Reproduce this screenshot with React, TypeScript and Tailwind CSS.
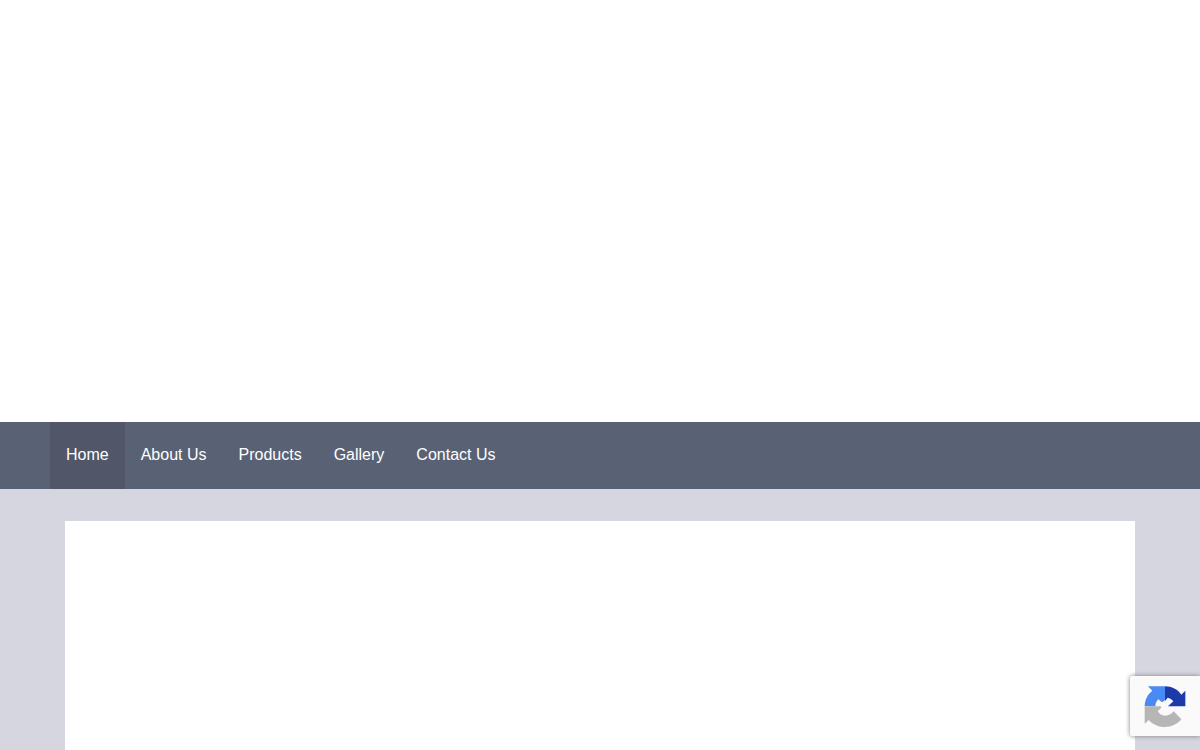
import React from "react";

const navItems = [
  { label: "Home", href: "#home" },
  { label: "About Us", href: "#about" },
  { label: "Products", href: "#products" },
  { label: "Gallery", href: "#gallery" },
  { label: "Contact Us", href: "#contact" },
];

const NavBar: React.FC = () => {
  return (
    <nav className="w-full bg-[#596275] px-[50px]">
      <ul className="flex">
        {navItems.map((item, index) => (
          <li key={item.label}>
            <a
              href={item.href}
              className={
                index === 0
                  ? "block px-4 pb-[2px] text-base leading-[65px] text-white bg-[#515669]"
                  : "block px-4 pb-[2px] text-base leading-[65px] text-white hover:bg-[#515669]"
              }
            >
              {item.label}
            </a>
          </li>
        ))}
      </ul>
    </nav>
  );
};

const CaptchaBadge: React.FC = () => {
  return (
    <div className="fixed right-0 bottom-[14px] flex h-[60px] w-[70px] items-center rounded-l-xs bg-[#fafafb] pl-[10px] shadow-[0_0_5px_gray]">
      <svg viewBox="0 2 150 150" className="h-[50px] w-[50px]" aria-hidden="true">
        <path
          fill="#4a8af4"
          d="M75 18H24L37 31C23 42 14 58 14 78H46C46 70 49 63 55 57L66 66L75 60Z"
        />
        <path
          fill="#1c3aa9"
          d="M75 18C95 18 113 27 124 43L136 31V78H84L100 63C95 57 90 53 83 52L75 62Z"
        />
        <path
          fill="#b6b6b6"
          d="M14 78V130L26 119C37 132 55 140 75 140C95 140 112 131 124 117L101 93C95 101 86 106 75 106C65 106 58 101 53 93L64 82L62 78Z"
        />
      </svg>
    </div>
  );
};

const App: React.FC = () => {
  return (
    <div className="flex min-h-screen flex-col bg-[#d5d6e0] font-['Liberation_Sans',Arial,sans-serif]">
      <header className="h-[422px] bg-white"></header>
      <NavBar />
      <main className="flex flex-1 flex-col px-[65px] pt-8">
        <section className="flex-1 bg-white"></section>
      </main>
      <CaptchaBadge />
    </div>
  );
};

export default App;
